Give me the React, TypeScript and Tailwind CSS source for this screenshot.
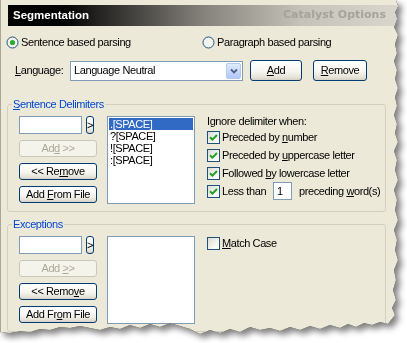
import React from "react";
import clsx from "clsx";

function U({ children }: { children: React.ReactNode }) {
  return <span className="underline underline-offset-[1px]">{children}</span>;
}

function XpButton({
  children,
  className,
  disabled = false,
}: {
  children?: React.ReactNode;
  className?: string;
  disabled?: boolean;
}) {
  return (
    <div
      className={clsx(
        "flex shrink-0 items-center justify-center rounded-[3px] border leading-none",
        disabled
          ? "border-[#C9C7BA] bg-[#F5F4EA] text-[#ACA899]"
          : "border-[#003C74] bg-[linear-gradient(180deg,#ffffff_0%,#f6f5f0_55%,#e6e3d8_85%,#d6d0c5_100%)] text-black",
        className
      )}
    >
      <span className="whitespace-pre">{children}</span>
    </div>
  );
}

function Check({ checked = false }: { checked?: boolean }) {
  return (
    <span className="flex h-[13px] w-[13px] shrink-0 items-center justify-center border border-[#1C5180] bg-[linear-gradient(135deg,#dcdcd7_0%,#f4f4f0_60%,#ffffff_100%)]">
      {checked && (
        <svg width="11" height="11" viewBox="0 0 11 11">
          <path d="M2 5.2 L4.4 7.6 L9 3" stroke="#21A121" strokeWidth="2" fill="none" />
        </svg>
      )}
    </span>
  );
}

function Radio({ checked = false }: { checked?: boolean }) {
  return (
    <svg width="13" height="13" viewBox="0 0 13 13" className="shrink-0">
      <circle cx="6.5" cy="6.5" r="5.5" fill="#f3f3ee" stroke="#1C5180" />
      {checked && <circle cx="6.5" cy="6.5" r="2.6" fill="#2CAB2C" />}
    </svg>
  );
}

function ComboArrow() {
  return (
    <div className="flex h-[16px] w-[15px] items-center justify-center rounded-[2px] border border-[#B4C8F6] bg-[linear-gradient(180deg,#e2ebfe_0%,#c3d5fd_60%,#b1c7f6_100%)]">
      <svg width="8" height="6" viewBox="0 0 8 6">
        <path d="M1 1.5 L4 4.5 L7 1.5" stroke="#4D6185" strokeWidth="1.8" fill="none" />
      </svg>
    </div>
  );
}

function Group({
  legend,
  className,
  children,
}: {
  legend: React.ReactNode;
  className?: string;
  children: React.ReactNode;
}) {
  return (
    <fieldset className={clsx("ml-[6px] w-[379px] rounded-[3px] border border-[#D0D0BF]", className)}>
      <legend className="ml-[4px] px-[1px] leading-[13px] text-[#0046D5]">{legend}</legend>
      <div className="flex pb-[7px] pl-[11px] pt-[5px]">{children}</div>
    </fieldset>
  );
}

function EntryColumn({
  add,
  remove,
  fromFile,
}: {
  add: React.ReactNode;
  remove: React.ReactNode;
  fromFile: React.ReactNode;
}) {
  return (
    <div className="flex w-[78px] shrink-0 flex-col gap-[6px]">
      <div className="flex h-[18px]">
        <div className="h-[18px] w-[63px] border border-[#7F9DB9] bg-white" />
        <XpButton className="ml-[4px] h-[18px] w-[8px]">&gt;</XpButton>
      </div>
      <XpButton disabled className="h-[17px]">
        {add}
      </XpButton>
      <XpButton className="h-[17px]">{remove}</XpButton>
      <XpButton className="h-[17px]">{fromFile}</XpButton>
    </div>
  );
}

const delimiters = [".[SPACE]", "?[SPACE]", "![SPACE]", ":[SPACE]"];

export default function App() {
  return (
    <div className="h-[343px] w-[407px] overflow-hidden bg-white font-['Liberation_Sans',Arial,sans-serif] text-[11px] tracking-[-0.4px] text-black">
      <div className="[filter:drop-shadow(0_0_0.6px_rgba(0,0,0,0.9))_drop-shadow(4px_4px_3px_rgba(0,0,0,0.5))]">
        <div className="h-[336px] w-[400px] border-l border-[#aaa799] bg-[#ECE9D8] pt-[5px] [clip-path:polygon(0_0,396px_0,398px_6px,395px_12px,397px_19px,394px_27px,398px_35px,395px_44px,397px_53px,394px_61px,397px_70px,395px_79px,398px_88px,395px_97px,397px_106px,394px_115px,397px_124px,395px_133px,398px_142px,394px_151px,397px_160px,395px_170px,398px_180px,394px_190px,397px_200px,395px_210px,398px_220px,394px_230px,397px_240px,395px_250px,398px_260px,394px_270px,396px_280px,393px_290px,396px_300px,392px_308px,395px_315px,391px_320px,388px_324px,380px_322px,372px_325px,364px_323px,356px_327px,348px_324px,340px_328px,330px_325px,320px_329px,310px_326px,300px_330px,290px_327px,280px_331px,270px_328px,260px_330px,250px_327px,240px_332px,230px_329px,220px_333px,210px_330px,200px_334px,190px_329px,180px_326px,170px_323px,160px_327px,150px_324px,140px_328px,130px_325px,120px_329px,110px_327px,100px_330px,90px_328px,80px_326px,70px_328px,60px_327px,50px_330px,40px_329px,30px_332px,20px_331px,10px_333px,0_332px)]">
          {/* Title bar */}
          <div className="ml-[7px] flex h-[21px] w-[390px] items-center justify-between bg-[linear-gradient(90deg,#000000_0%,#050505_15%,#85827b_50%,#c5c2b9_75%,#d9d6cd_100%)] pl-[5px] pr-[12px]">
            <span className="text-[11.5px] font-bold tracking-normal text-white">Segmentation</span>
            <span className="font-['DejaVu_Sans',sans-serif] font-bold tracking-normal text-[#a6a398]">
              Catalyst Options
            </span>
          </div>

          {/* Parsing mode */}
          <div className="mt-[9px] flex h-[14px] items-center">
            <label className="ml-[5px] flex w-[196px] items-center gap-[2px]">
              <Radio checked />
              Sentence based parsing
            </label>
            <label className="flex items-center gap-[2px]">
              <Radio />
              Paragraph based parsing
            </label>
          </div>

          {/* Language */}
          <div className="mt-[11px] flex h-[21px] items-center">
            <span className="ml-[14px] w-[55px]">
              <U>L</U>anguage:
            </span>
            <div className="flex h-[20px] w-[173px] items-center justify-between border border-[#7F9DB9] bg-white pl-[3px] pr-[1px]">
              <span>Language Neutral</span>
              <ComboArrow />
            </div>
            <XpButton className="ml-[7px] h-[21px] w-[52px]">
              <U>A</U>dd
            </XpButton>
            <XpButton className="ml-[11px] h-[21px] w-[54px]">
              <U>R</U>emove
            </XpButton>
          </div>

          {/* Sentence Delimiters */}
          <Group
            className="mt-[17px]"
            legend={
              <>
                <U>S</U>entence Delimiters
              </>
            }
          >
            <EntryColumn
              add={
                <>
                  Ad<U>d</U> &gt;&gt;
                </>
              }
              remove={
                <>
                  &lt;&lt; Re<U>m</U>ove
                </>
              }
              fromFile={
                <>
                  Add <U>F</U>rom File
                </>
              }
            />
            <div className="ml-[10px] h-[88px] w-[88px] shrink-0 border border-[#7F9DB9] bg-white p-[1px]">
              {delimiters.map((d, i) => (
                <div
                  key={d}
                  className={clsx("h-[12px] pl-[1px] leading-[12px]", i === 0 && "bg-[#316AC5] text-white")}
                >
                  {d}
                </div>
              ))}
            </div>
            <div className="-mt-[1px] ml-[12px] flex flex-col">
              <div className="leading-[13px]">Ignore delimiter when:</div>
              <div className="flex h-[18px] items-center gap-[2px]">
                <Check checked />
                <span>
                  Preceded by <U>n</U>umber
                </span>
              </div>
              <div className="flex h-[18px] items-center gap-[2px]">
                <Check checked />
                <span>
                  Preceded by <U>u</U>ppercase letter
                </span>
              </div>
              <div className="flex h-[18px] items-center gap-[2px]">
                <Check checked />
                <span>
                  Followed <U>b</U>y lowercase letter
                </span>
              </div>
              <div className="flex h-[18px] items-center gap-[2px]">
                <Check checked />
                <span className="w-[49px]">Less than</span>
                <div className="flex h-[18px] w-[19px] items-center border border-[#7F9DB9] bg-white pl-[3px]">1</div>
                <span className="ml-[5px]">
                  preceding <U>w</U>ord(s)
                </span>
              </div>
            </div>
          </Group>

          {/* Exceptions */}
          <Group className="mt-[6px]" legend="Exceptions">
            <EntryColumn
              add={
                <>
                  Add <U>&gt;</U>&gt;
                </>
              }
              remove={
                <>
                  &lt;&lt; Remo<U>v</U>e
                </>
              }
              fromFile={
                <>
                  Add Fr<U>o</U>m File
                </>
              }
            />
            <div className="ml-[10px] h-[88px] w-[88px] shrink-0 border border-[#7F9DB9] bg-white" />
            <div className="ml-[12px] mt-[1px] flex h-[13px] items-center gap-[2px]">
              <Check />
              <span>
                <U>M</U>atch Case
              </span>
            </div>
          </Group>
        </div>
      </div>
    </div>
  );
}
